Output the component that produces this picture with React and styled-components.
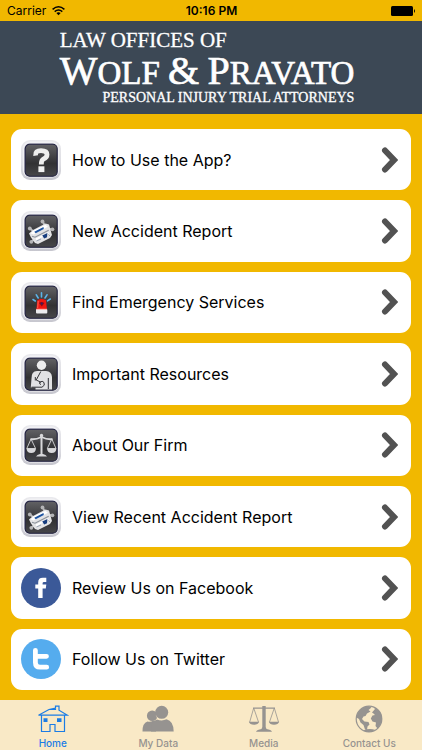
import React from "react";
import styled, { createGlobalStyle } from "styled-components";

const GlobalStyle = createGlobalStyle`
  *, *::before, *::after { box-sizing: border-box; }
  body { margin: 0; background: #f1b800; font-family: Inter, "Liberation Sans", sans-serif; }
`;

const Screen = styled.div`
  display: flex;
  flex-direction: column;
  min-height: 100vh;
  background: #f1b800;
  color: #000;
`;

const StatusBar = styled.div`
  display: grid;
  grid-template-columns: 1fr auto 1fr;
  align-items: center;
  height: 21px;
  padding: 0 6px 0 7px;
  font-size: 12px;
  line-height: 20px;
`;

const Carrier = styled.span`
  display: flex;
  align-items: center;
  gap: 6px;
`;

const Clock = styled.time`
  font-weight: 600;
`;

const BatterySlot = styled.span`
  display: flex;
  justify-content: flex-end;
`;

const Banner = styled.header`
  display: flex;
  justify-content: center;
  height: 93px;
  padding-top: 6px;
  background: #3c4855;
  color: #fff;
  font-family: "Liberation Serif", serif;
`;

const FirmName = styled.h1`
  display: flex;
  flex-direction: column;
  margin: 0 8px 0 0;
  font-weight: 400;
  white-space: nowrap;
  -webkit-text-stroke: 0.3px #fff;
`;

const FirmIntro = styled.span`
  font-size: 21px;
  line-height: 26px;
`;

const FirmTitle = styled.span`
  font-size: 33px;
  line-height: 36px;
  -webkit-text-stroke: 0.7px #fff;
`;

const Initial = styled.span`
  font-size: 40px;
`;

const FirmTagline = styled.span`
  align-self: flex-end;
  font-size: 14px;
  line-height: 14px;
`;

const Menu = styled.main`
  flex: 1;
  display: grid;
  grid-auto-rows: 1fr;
  gap: 10px;
  padding: 15px 11px 10px;
`;

const MenuRow = styled.button`
  display: flex;
  align-items: center;
  gap: 11px;
  min-height: 60px;
  padding: 0 13px 0 10px;
  border: 0;
  border-radius: 11px;
  background: #fff;
  color: #000;
  font: inherit;
  font-size: 16px;
  line-height: 22px;
  text-align: left;
  cursor: pointer;
`;

const RowLabel = styled.span`
  flex: 1;
`;

const TabBar = styled.nav`
  display: grid;
  grid-template-columns: repeat(4, 1fr);
  height: 50px;
  background: #f9e9c6;
`;

const Tab = styled.a`
  display: flex;
  flex-direction: column;
  align-items: center;
  gap: 3px;
  padding-top: 5px;
  color: ${(p) => (p.$active ? "#1b7ce5" : "#969390")};
  font-size: 10px;
  font-weight: 500;
  line-height: 14px;
  text-decoration: none;
`;

const Icon = styled.svg`
  display: block;
  flex: none;
`;

const Wifi = () => (
  <Icon width="13" height="10" viewBox="0 0 13 10" fill="none" stroke="#000" strokeWidth="1.5" aria-hidden="true">
    <path d="M.6 3.4Q6.5-1.8 12.4 3.4M2.7 5.6Q6.5 2.4 10.3 5.6" />
    <path d="M4.4 7Q6.5 5.4 8.6 7L6.5 9.3Z" fill="#000" stroke="none" />
  </Icon>
);

const Battery = () => (
  <Icon width="25" height="10" viewBox="0 0 25 10" aria-label="Battery full">
    <rect width="22" height="10" rx="1.5" />
    <path d="M23 3q2 2 0 4z" />
  </Icon>
);

const Chevron = () => (
  <Icon width="18" height="28" viewBox="0 0 18 28" fill="none" stroke="#525252" strokeWidth="6" strokeLinecap="round" aria-hidden="true">
    <path d="M5 4.5L14 14L5 23.5" />
  </Icon>
);

const Tile = ({ id, children }) => (
  <Icon width="40" height="40" viewBox="0 0 40 40" aria-hidden="true">
    <defs>
      <linearGradient id={`${id}-rim`} x1="0" y1="0" x2="0" y2="1">
        <stop offset="0" stopColor="#e9e9ed" />
        <stop offset=".6" stopColor="#dedee3" />
        <stop offset="1" stopColor="#c6c6ce" />
      </linearGradient>
      <linearGradient id={`${id}-face`} x1="0" y1="0" x2="0" y2="1">
        <stop offset="0" stopColor="#626265" />
        <stop offset=".4" stopColor="#414144" />
        <stop offset=".6" stopColor="#323234" />
        <stop offset="1" stopColor="#464649" />
      </linearGradient>
    </defs>
    <rect width="40" height="40" rx="9" fill={`url(#${id}-rim)`} />
    <rect x="1.8" y="1.5" width="36.4" height="36" rx="7.5" fill="#f1f1f4" />
    <rect x="3.3" y="3.3" width="33.4" height="33.4" rx="5.5" fill="#b9b9ca" />
    <rect x="4.2" y="4.2" width="32" height="32" rx="4.5" fill={`url(#${id}-face)`} stroke="#22223f" strokeWidth="1.1" />
    {children}
  </Icon>
);

const QuestionIcon = () => (
  <Tile id="question">
    <path d="M14.6 15.6Q14 10.6 20 10.6Q26 10.6 26 14.6Q26 17.6 22.6 18.9Q20.3 20 20.3 24.4" fill="none" stroke="#eee" strokeWidth="4.8" />
    <rect x="17.4" y="26.3" width="6" height="5.8" fill="#f2f2f2" />
  </Tile>
);

const CrashIcon = ({ id }) => (
  <Tile id={id}>
    <g stroke="#bcbcbe" strokeWidth="1.8" strokeLinecap="round">
      <path d="M9 17.5L12 20M21.8 10.5L23.5 14M29.5 18L31.5 18.5M10.5 30.5L14 28" />
    </g>
    <g fill="#b4b4b6">
      <circle cx="8.8" cy="17.5" r="1.9" />
      <circle cx="21.5" cy="10.5" r="1.9" />
      <circle cx="31.4" cy="18.3" r="1.9" />
      <circle cx="10.3" cy="30.8" r="1.9" />
    </g>
    <path d="M8 22.5L12 19L24.5 12.4L28 13.5L31 24L29 27L17 33L14 32L10 26.5Z" fill="#e3e3e5" />
    <path d="M9.5 22.3L12.5 19.5L24.5 13.8L26.8 15.8L12.5 23.4Z" fill="#fff" />
    <path d="M13.3 20.7L22.5 16L22.8 18.1L14.7 22.2Z" fill="#1c529f" />
    <path d="M11 25.3L14 26.2L27.7 19.2" fill="none" stroke="#8c929b" strokeWidth="1.2" />
    <path d="M15 28.4L27.5 22" stroke="#fff" strokeWidth="1.8" />
    <path d="M21.2 24.4L26.4 22L26 26.3L23.2 27.6Z" fill="#173d7e" />
    <path d="M15.5 30L20 28M27.5 23.5L29 25" stroke="#9ba5b5" strokeWidth="1" />
  </Tile>
);

const SirenIcon = () => (
  <Tile id="siren">
    <g stroke="#5cb4e8" strokeWidth="1.6" strokeLinecap="round">
      <path d="M12 17.5L14.3 19M15.3 12.8L17.2 16M20.5 10.8V15M26 12.8L24 16M29.3 17L26.5 18.8" />
    </g>
    <path d="M16.3 18.2Q20.5 15.8 25 18.2L26 28H15.3Z" fill="#ef1611" />
    <path d="M18 21Q20 18.8 23.5 21L20.8 24.5Z" fill="#8c0e18" />
    <circle cx="20.8" cy="21.5" r="1" fill="#36196b" />
    <path d="M17.2 19L16.7 26" stroke="#ff6b5e" strokeWidth=".9" />
    <rect x="15" y="27" width="11.3" height="4.5" rx="1" fill="#ececee" />
    <path d="M15.5 27.3H26" stroke="#ffaaa5" />
  </Tile>
);

const InjuryIcon = () => (
  <Tile id="injury">
    <circle cx="20.5" cy="11.3" r="4.7" fill="#ededee" />
    <path d="M10.5 24.5Q10.3 17.3 16 17H25Q30.6 17.3 31 23V35.5H14.5V33.5H9.8Z" fill="#e2e2e4" />
    <path d="M14.3 23V26.5M27.3 24V35M19.8 17.5L15.2 26L20 28.3M10.5 33.2H21Q24.5 31.5 23 28.5Q21.5 26 18.5 28.5Q18 30 20 30.5" fill="none" stroke="#333337" strokeWidth="1" />
  </Tile>
);

const FirmIcon = () => (
  <Tile id="firm">
    <g fill="none" stroke="#d8d8da" strokeWidth="1.1">
      <path d="M20.5 10V29" strokeWidth="2" />
      <path d="M9.5 14Q14 15 20.5 12Q27 15 31.5 14" strokeWidth="1.8" />
      <path d="M10 14L5.8 23.5H14.6ZM30.8 14L26.3 23.5H35Z" strokeWidth=".9" />
    </g>
    <g fill="#d8d8da">
      <circle cx="20.5" cy="10.5" r="1.7" />
      <path d="M5.5 23.5H15Q14.5 28 10.2 28Q6 28 5.5 23.5ZM26 23.5H35.4Q35 28 30.7 28Q26.5 28 26 23.5ZM15 31.5Q16 29.5 19 29H22Q25 29.5 26 31.5Z" />
    </g>
  </Tile>
);

const FacebookIcon = () => (
  <Icon width="40" height="40" viewBox="0 0 40 40" aria-hidden="true">
    <circle cx="20" cy="20" r="20" fill="#3b5998" />
    <path d="M17.2 30V20.5H14.3V16.4H17.2V14.2Q17.2 9.8 21.8 9.8H25.3V13.9H23Q21.6 13.9 21.6 15.3V16.4H25.3L24.8 20.5H21.6V30Z" fill="#fff" />
  </Icon>
);

const TwitterIcon = () => (
  <Icon width="40" height="40" viewBox="0 0 40 40" aria-hidden="true">
    <circle cx="20" cy="20" r="20" fill="#55acee" />
    <path d="M14.4 11.3V23.5Q14.4 28.2 19 28.2H25.7M14.4 17.3H25.5" fill="none" stroke="#fff" strokeWidth="4.8" strokeLinecap="round" />
  </Icon>
);

const HomeIcon = () => (
  <Icon width="32" height="28" viewBox="0 0 32 28" fill="none" stroke="currentColor" strokeWidth="1.2" aria-hidden="true">
    <path d="M1.5 10.2L12 4.5L18.5 3V1.2H22V5.2L30.5 10.2ZM4.5 10.5V26.5H13V19.5H18V26.5H27.5V10.5M12 4.5H18.5V3" />
    <path d="M6.5 13.2H10.5V17H6.5ZM20 13.2H24.5V17H20Z" fill="currentColor" stroke="none" />
  </Icon>
);

const PeopleIcon = () => (
  <Icon width="32" height="28" viewBox="0 0 32 28" fill="currentColor" aria-hidden="true">
    <path d="M.5 26.5Q.3 18 5.5 16.4Q8 17.5 11 15.8H14V26.5Z" />
    <circle cx="10.2" cy="10.8" r="5.3" />
    <path d="M9 26.5Q8.8 16.5 15 14.5Q20 16.5 24.5 14.3Q31.5 16 31.7 26.5Z" />
    <circle cx="19.7" cy="7.3" r="6.5" />
    <path d="M14.2 10.5Q14.5 13.3 17 14.5" fill="none" stroke="#f9e9c6" strokeWidth=".4" />
  </Icon>
);

const ScalesIcon = () => (
  <Icon width="32" height="28" viewBox="0 0 32 28" fill="currentColor" aria-hidden="true">
    <path d="M14.3 1H17.7V23H14.3ZM5 2.4H27V3.8H5ZM8 26.8Q9 24.6 13.5 24L14.3 22H17.7L18.5 24Q23 24.6 24 26.8Z" />
    <path d="M5.7 3L1.7 17M5.7 3L10.5 17M26.3 3L21.5 17M26.3 3L30.5 17" fill="none" stroke="currentColor" strokeWidth=".8" />
    <path d="M.8 16.8H11.2Q10.2 19.8 6 19.8Q1.8 19.8.8 16.8ZM20.8 16.8H31.2Q30.2 19.8 26 19.8Q21.8 19.8 20.8 16.8Z" />
  </Icon>
);

const GlobeIcon = () => (
  <Icon width="28" height="28" viewBox="0 0 28 28" aria-hidden="true">
    <circle cx="14" cy="14" r="12.8" fill="#f9e9c6" stroke="currentColor" strokeWidth="1.2" />
    <path d="M4 6Q8 1 14 1.2L16.5 2.5L13.5 5L15.5 6.5L12 8.5L10.5 11L8.5 11.5L7 14L9.5 16.5L13.5 17L14.5 19.5L12.5 21.5L12 25L10 24.5L8.5 20L5.5 17.5L4 14L1.5 12.5Q1.5 9 4 6Z" fill="currentColor" />
    <path d="M17 7.5L20 4L18.5 2Q26.5 5 27 13Q27 19 22.5 23.5L20.5 21L21 17.5L17.5 16.5L15.8 13.5L17.5 10.5L20 10L18.5 8.5Z" fill="currentColor" />
    <path d="M8 25.5Q14 23 20.5 25Q14 28.5 8 25.5Z" fill="currentColor" />
  </Icon>
);

const menuItems = [
  { label: "How to Use the App?", icon: <QuestionIcon /> },
  { label: "New Accident Report", icon: <CrashIcon id="new-report" /> },
  { label: "Find Emergency Services", icon: <SirenIcon /> },
  { label: "Important Resources", icon: <InjuryIcon /> },
  { label: "About Our Firm", icon: <FirmIcon /> },
  { label: "View Recent Accident Report", icon: <CrashIcon id="recent-report" /> },
  { label: "Review Us on Facebook", icon: <FacebookIcon /> },
  { label: "Follow Us on Twitter", icon: <TwitterIcon /> },
];

const tabs = [
  { label: "Home", href: "#home", icon: <HomeIcon />, active: true },
  { label: "My Data", href: "#my-data", icon: <PeopleIcon /> },
  { label: "Media", href: "#media", icon: <ScalesIcon /> },
  { label: "Contact Us", href: "#contact", icon: <GlobeIcon /> },
];

export default function App() {
  return (
    <Screen>
      <GlobalStyle />
      <StatusBar>
        <Carrier>
          Carrier
          <Wifi />
        </Carrier>
        <Clock>10:16 PM</Clock>
        <BatterySlot>
          <Battery />
        </BatterySlot>
      </StatusBar>
      <Banner>
        <FirmName>
          <FirmIntro>LAW OFFICES OF</FirmIntro>
          <FirmTitle>
            <Initial>W</Initial>OLF <Initial>&amp;</Initial> <Initial>P</Initial>RAVATO
          </FirmTitle>
          <FirmTagline>PERSONAL INJURY TRIAL ATTORNEYS</FirmTagline>
        </FirmName>
      </Banner>
      <Menu>
        {menuItems.map((item) => (
          <MenuRow key={item.label} type="button">
            {item.icon}
            <RowLabel>{item.label}</RowLabel>
            <Chevron />
          </MenuRow>
        ))}
      </Menu>
      <TabBar>
        {tabs.map((tab) => (
          <Tab key={tab.label} href={tab.href} $active={tab.active} aria-current={tab.active ? "page" : undefined}>
            {tab.icon}
            {tab.label}
          </Tab>
        ))}
      </TabBar>
    </Screen>
  );
}
